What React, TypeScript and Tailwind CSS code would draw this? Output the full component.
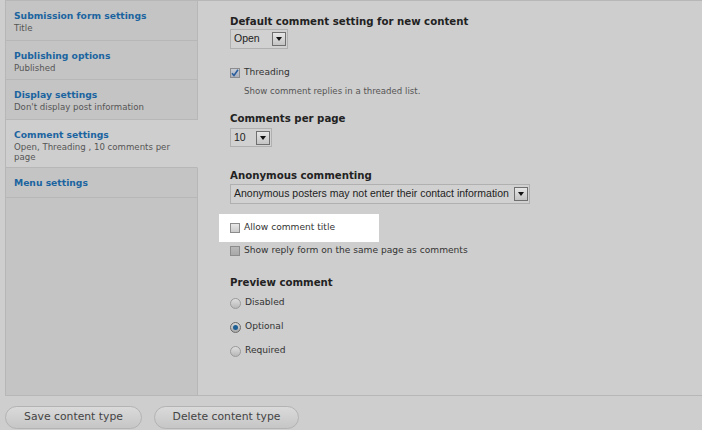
import React from "react";

const tabs = [
  { title: "Submission form settings", sub: "Title", h: "h-[40px]" },
  { title: "Publishing options", sub: "Published", h: "h-[39px]" },
  { title: "Display settings", sub: "Don't display post information", h: "h-[40px]" },
  { title: "Comment settings", sub: "Open, Threading , 10 comments per page", h: "h-[48px]", active: true },
  { title: "Menu settings", sub: "", h: "h-[30px]" },
];

const Select = ({ value, w, h }: { value: string; w: string; h: string }) => (
  <div className={`${w} ${h} flex items-center justify-between border border-[#b0b0b0] bg-[#d1d1d1] pl-[3px] pr-[1px] font-['Liberation_Sans',Arial,sans-serif] text-[10.5px] text-[#222] whitespace-nowrap`}>
    <span>{value}</span>
    <span className="w-[14px] h-[14px] shrink-0 flex items-center justify-center border border-[#6f6f6f] bg-gradient-to-b from-[#e6e6e6] to-[#c4c4c4]">
      <svg width="6" height="4" viewBox="0 0 6 4">
        <path d="M0 0h6L3 4z" fill="#111" />
      </svg>
    </span>
  </div>
);

const Checkbox = ({ checked, dark }: { checked?: boolean; dark?: boolean }) => (
  <span
    className={`w-[10px] h-[10px] shrink-0 flex items-center justify-center border border-[#8c8c8c] bg-gradient-to-b ${
      checked ? "from-[#c8cdd6] to-[#a9b0bc]" : dark ? "from-[#b8b8b8] to-[#a8a8a8]" : "from-[#e8e8e8] to-[#cbcbcb]"
    }`}
  >
    {checked && (
      <svg width="8" height="8" viewBox="0 0 8 8">
        <path d="M1 4.2L3 6.5L7 0.8" stroke="#2a5d9c" strokeWidth="1.6" fill="none" />
      </svg>
    )}
  </span>
);

const Radio = ({ checked }: { checked?: boolean }) => (
  <span
    className={`w-[11px] h-[11px] shrink-0 rounded-full flex items-center justify-center border bg-gradient-to-b ${
      checked ? "border-[#6a6a6a] from-[#d8d8d8] to-[#aaaaaa]" : "border-[#9a9a9a] from-[#dedede] to-[#b8b8b8]"
    }`}
  >
    {checked && <span className="w-[5px] h-[5px] rounded-full bg-[#1d5f95]" />}
  </span>
);

export default function App() {
  return (
    <div className="w-[702px] h-[430px] overflow-hidden bg-[#cecece] font-['DejaVu_Sans',Verdana,sans-serif]">
      <div className="ml-[5px] h-[396px] flex border-l border-t border-b border-[#b7b7b7]">
        {/* vertical tabs */}
        <div className="w-[192px] flex flex-col">
          {tabs.map((t) => (
            <div
              key={t.title}
              className={`${t.h} shrink-0 border-b border-r border-b-[#b7b7b7] pl-[8px] pt-[8px] ${
                t.active ? "bg-[#cecece] border-r-[#cecece]" : "bg-[#c4c4c4] border-r-[#b7b7b7]"
              }`}
            >
              <div className="text-[9.2px] leading-[13px] font-bold text-[#1b64a0]">{t.title}</div>
              {t.sub && (
                <div className="text-[8.6px] leading-[9.5px] mt-[2px] text-[#555] pr-[20px]">{t.sub}</div>
              )}
            </div>
          ))}
          <div className="flex-1 bg-[#c4c4c4] border-r border-[#b7b7b7]" />
        </div>

        {/* panel */}
        <div className="flex-1 pl-[32px] pt-[14px] text-[#333]">
          <div className="text-[10.2px] leading-[14px] font-bold text-[#222]">Default comment setting for new content</div>
          <Select value="Open" w="w-[58px]" h="h-[20px]" />

          <div className="mt-[17px] h-[14px] flex items-center gap-[4px] text-[9.1px]">
            <Checkbox checked />
            <span>Threading</span>
          </div>
          <div className="mt-[5px] pl-[14px] text-[8.6px] leading-[12px] text-[#555]">
            Show comment replies in a threaded list.
          </div>

          <div className="mt-[15px] text-[10.2px] leading-[14px] font-bold text-[#222]">Comments per page</div>
          <div className="mt-[2px]">
            <Select value="10" w="w-[42px]" h="h-[19px]" />
          </div>

          <div className="mt-[22px] text-[10.2px] leading-[14px] font-bold text-[#222]">Anonymous commenting</div>
          <div className="mt-[1px]">
            <Select value="Anonymous posters may not enter their contact information" w="w-[300px]" h="h-[20px]" />
          </div>

          <div className="mt-[10px] -ml-[11px] pl-[11px] w-[160px] h-[28px] bg-white flex items-center gap-[4px] text-[9.1px]">
            <Checkbox />
            <span>Allow comment title</span>
          </div>
          <div className="mt-[2px] h-[14px] flex items-center gap-[4px] text-[9.1px]">
            <Checkbox dark />
            <span>Show reply form on the same page as comments</span>
          </div>

          <div className="mt-[18px] text-[10.2px] leading-[14px] font-bold text-[#222]">Preview comment</div>
          <div className="mt-[6px] h-[14px] flex items-center gap-[4px] text-[9.1px]">
            <Radio />
            <span>Disabled</span>
          </div>
          <div className="mt-[10px] h-[14px] flex items-center gap-[4px] text-[9.1px]">
            <Radio checked />
            <span>Optional</span>
          </div>
          <div className="mt-[10px] h-[14px] flex items-center gap-[4px] text-[9.1px]">
            <Radio />
            <span>Required</span>
          </div>
        </div>
      </div>

      {/* actions */}
      <div className="mt-[10px] ml-[5px] flex gap-[12px]">
        <button className="w-[137px] h-[23px] rounded-full border border-[#b3b3b3] bg-gradient-to-b from-[#dadada] to-[#c6c6c6] text-[10.8px] text-[#444]">
          Save content type
        </button>
        <button className="w-[145px] h-[23px] rounded-full border border-[#b3b3b3] bg-gradient-to-b from-[#dadada] to-[#c6c6c6] text-[10.8px] text-[#444]">
          Delete content type
        </button>
      </div>
    </div>
  );
}
